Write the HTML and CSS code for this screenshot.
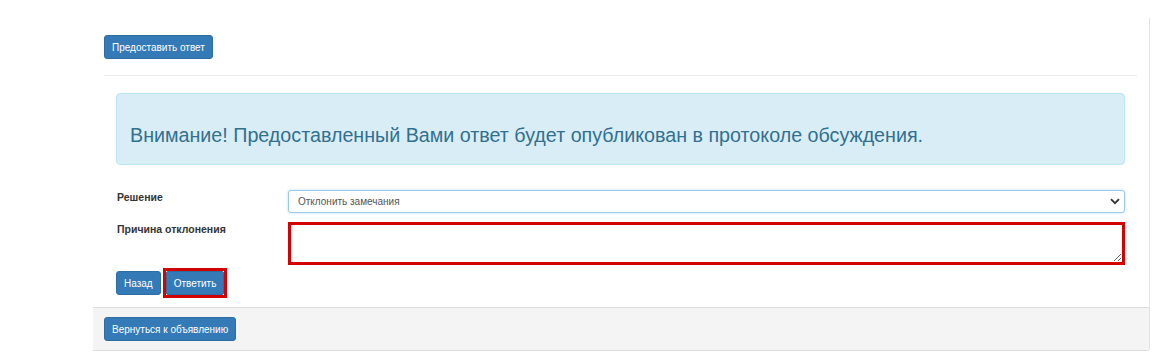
FILE: index.html
```html
<!DOCTYPE html>
<html lang="ru">
<head>
    <meta charset="UTF-8">
    <title>Ответ на замечания</title>
    <link rel="stylesheet" href="styles.css">
</head>
<body>

    <div class="panel">
        <div class="panel-body">
            <button class="btn">Предоставить ответ</button>
            <hr class="divider">

            <div class="inner">
                <div class="alert">
                    Внимание! Предоставленный Вами ответ будет опубликован в протоколе обсуждения.
                </div>

                <form class="answer-form">
                    <div class="form-row">
                        <label class="form-label">Решение</label>
                        <div class="select-wrap">
                            <select class="form-control">
                                <option>Отклонить замечания</option>
                                <option>Принять замечания</option>
                            </select>
                            <svg class="chevron" width="10" height="7" viewBox="0 0 10 7">
                                <path d="M1 1.2 L5 5.2 L9 1.2" fill="none" stroke="#333" stroke-width="1.8"/>
                            </svg>
                        </div>
                    </div>
                    <div class="form-row">
                        <label class="form-label">Причина отклонения</label>
                        <textarea class="form-control textarea marked"></textarea>
                    </div>
                    <div class="actions">
                        <button type="button" class="btn">Назад</button>
                        <span class="mark"><button type="submit" class="btn">Ответить</button></span>
                    </div>
                </form>
            </div>
        </div>

        <div class="panel-footer">
            <button class="btn">Вернуться к объявлению</button>
        </div>
    </div>

</body>
</html>
```

FILE: styles.css
```css
* {
    margin: 0;
    padding: 0;
    box-sizing: border-box;
}

body {
    font-family: 'Liberation Sans', Arial, sans-serif;
    font-size: 11px;
    color: #333;
    background: #fff;
    padding: 18px 14px 0 93px;
}

.panel {
    border-right: 1px solid #e3e3e3;
    border-bottom: 1px solid #ddd;
    border-bottom-right-radius: 3px;
}

.panel-body {
    padding: 17px 12px 9px 11px;
}

.btn {
    font-family: inherit;
    font-size: 10px;
    color: #fff;
    background: #337ab7;
    border: 1px solid #2e6da4;
    border-radius: 3px;
    height: 24px;
    padding: 0 7px;
    cursor: pointer;
}

.divider {
    border: none;
    border-top: 1px solid #eee;
    margin: 16px 0 17px;
}

.inner {
    padding: 0 12px;
}

.alert {
    background: #d9edf7;
    border: 1px solid #bce8f1;
    border-radius: 4px;
    color: #31708f;
    font-size: 19.7px;
    height: 72px;
    display: flex;
    align-items: center;
    padding: 12px 13px 0;
}

.answer-form {
    margin-top: 25px;
    display: flex;
    flex-direction: column;
}

.form-row {
    display: flex;
    align-items: flex-start;
    margin-bottom: 9px;
}

.form-label {
    width: 172px;
    flex-shrink: 0;
    font-size: 10.5px;
    font-weight: bold;
    padding: 0 0 0 1px;
    line-height: 14px;
}

.select-wrap {
    position: relative;
    flex: 1;
}

.form-control {
    display: block;
    width: 100%;
    font-family: inherit;
    font-size: 10px;
    color: #555;
    background: #fff;
    border: 1px solid #9fc9ea;
    border-radius: 3px;
    height: 23px;
    padding: 0 9px;
    box-shadow: 0 0 3px rgba(102, 175, 233, 0.45);
    appearance: none;
    -webkit-appearance: none;
    outline: none;
}

.chevron {
    position: absolute;
    right: 5px;
    top: 8px;
}

.textarea {
    flex: 1;
    height: 43px;
    resize: vertical;
    box-shadow: none;
}

.marked {
    border: 3px solid #d50000;
    border-radius: 0;
}

.actions {
    display: flex;
    align-items: center;
    margin-top: -6px;
}

.actions .btn {
    padding: 0 7px;
}

.mark {
    display: inline-flex;
    border: 3px solid #d50000;
    margin-left: 2px;
}

.mark .btn {
    border-radius: 2px;
}

.panel-footer {
    background: #f4f4f4;
    border-top: 1px solid #ddd;
    padding: 9px 11px 8px;
    height: 43px;
}
```
